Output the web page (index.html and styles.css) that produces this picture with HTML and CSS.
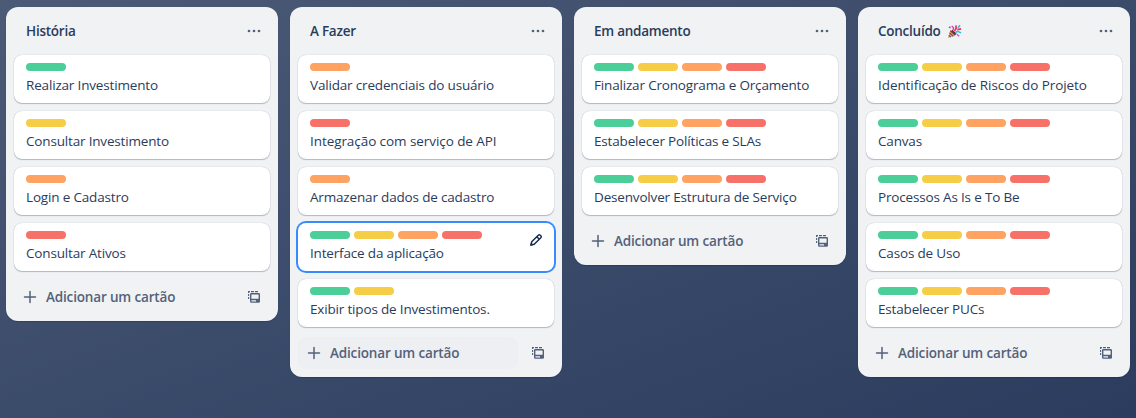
FILE: index.html
```
<!DOCTYPE html>
<html lang="pt-BR">
<head>
<meta charset="utf-8">
<title>Quadro</title>
<link rel="stylesheet" href="styles.css">
</head>
<body>
<svg class="sprite" aria-hidden="true">
  <symbol id="more" viewBox="0 0 16 16"><g fill="currentColor"><circle cx="3" cy="8" r="1.35"/><circle cx="8" cy="8" r="1.35"/><circle cx="13" cy="8" r="1.35"/></g></symbol>
  <symbol id="plus" viewBox="0 0 16 16"><path d="M8 2.5v11M2.5 8h11" fill="none" stroke="currentColor" stroke-width="1.5" stroke-linecap="round"/></symbol>
  <symbol id="template" viewBox="0 0 16 16"><path d="M2.6 2v2M2.6 5v2M2.6 8v2M2 2.6h2M5 2.6h3M9 2.6h3" fill="none" stroke="currentColor" stroke-width="1.1"/><path fill="currentColor" fill-rule="evenodd" d="M5.3 4h7.4A1.3 1.3 0 0 1 14 5.3v7.2a1.3 1.3 0 0 1-1.3 1.3H5.3A1.3 1.3 0 0 1 4 12.5V5.3A1.3 1.3 0 0 1 5.3 4zM5.4 5.4v4.4h7.2V5.4zM5.4 11.2v1.2H10v-1.2z"/></symbol>
  <symbol id="pencil" viewBox="0 0 16 16"><path d="M3 13l.7-3.2 6.6-6.6c.6-.6 1.3-.6 1.9 0l.6.6c.6.6.6 1.3 0 1.9l-6.6 6.6zM8.8 4.7l2.5 2.5" fill="none" stroke="currentColor" stroke-width="1.5" stroke-linejoin="round"/><path d="M2.2 13.8l.8-3.2L5.4 13z" fill="currentColor"/></symbol>
  <symbol id="party" viewBox="0 0 16 16"><path d="M1 15L3.5 6.5 9.5 12z" fill="#e0a53a"/><path d="M2.7 9.5l4 3.7M1.9 12l2 2M3.6 7.2l5 4.6" stroke="#62439a" stroke-width="1.1"/><path d="M5 7l4.5 4" stroke="#6a3030" stroke-width="2"/><path d="M5 2l2 2-.5 2.5M2 3.2l2 .8" fill="none" stroke="#d83bd0" stroke-width="1.5"/><path d="M8 7.5l1.8-3L9.5 1.5M11 6l4-.8" fill="none" stroke="#f0305c" stroke-width="1.8"/><path d="M9 9l2.5-1.2L15 9.5M11.5 4L14 1.5" fill="none" stroke="#2bbde6" stroke-width="1.7"/><path d="M10.5 11l2.5 2" stroke="#d84bc0" stroke-width="1.4"/></symbol>
</svg>
<main class="board">
  <section class="list">
    <header class="list-header"><h2>História</h2><svg class="icon"><use href="#more"/></svg></header>
    <div class="cards">
      <article class="card"><div class="labels"><i class="green"></i></div><p>Realizar Investimento</p></article>
      <article class="card"><div class="labels"><i class="yellow"></i></div><p>Consultar Investimento</p></article>
      <article class="card"><div class="labels"><i class="orange"></i></div><p>Login e Cadastro</p></article>
      <article class="card"><div class="labels"><i class="red"></i></div><p>Consultar Ativos</p></article>
    </div>
    <footer class="list-footer"><div class="add"><svg class="icon"><use href="#plus"/></svg><span>Adicionar um cartão</span></div><svg class="icon"><use href="#template"/></svg></footer>
  </section>
  <section class="list">
    <header class="list-header"><h2>A Fazer</h2><svg class="icon"><use href="#more"/></svg></header>
    <div class="cards">
      <article class="card"><div class="labels"><i class="orange"></i></div><p>Validar credenciais do usuário</p></article>
      <article class="card"><div class="labels"><i class="red"></i></div><p class="natural">Integração com serviço de API</p></article>
      <article class="card"><div class="labels"><i class="orange"></i></div><p>Armazenar dados de cadastro</p></article>
      <article class="card selected"><div class="labels"><i class="green"></i><i class="yellow"></i><i class="orange"></i><i class="red"></i></div><p>Interface da aplicação</p><svg class="icon edit"><use href="#pencil"/></svg></article>
      <article class="card"><div class="labels"><i class="green"></i><i class="yellow"></i></div><p>Exibir tipos de Investimentos.</p></article>
    </div>
    <footer class="list-footer"><div class="add hovered"><svg class="icon"><use href="#plus"/></svg><span>Adicionar um cartão</span></div><svg class="icon"><use href="#template"/></svg></footer>
  </section>
  <section class="list">
    <header class="list-header"><h2>Em andamento</h2><svg class="icon"><use href="#more"/></svg></header>
    <div class="cards">
      <article class="card"><div class="labels"><i class="green"></i><i class="yellow"></i><i class="orange"></i><i class="red"></i></div><p>Finalizar Cronograma e Orçamento</p></article>
      <article class="card"><div class="labels"><i class="green"></i><i class="yellow"></i><i class="orange"></i><i class="red"></i></div><p>Estabelecer Políticas e SLAs</p></article>
      <article class="card"><div class="labels"><i class="green"></i><i class="yellow"></i><i class="orange"></i><i class="red"></i></div><p>Desenvolver Estrutura de Serviço</p></article>
    </div>
    <footer class="list-footer"><div class="add"><svg class="icon"><use href="#plus"/></svg><span>Adicionar um cartão</span></div><svg class="icon"><use href="#template"/></svg></footer>
  </section>
  <section class="list">
    <header class="list-header"><h2>Concluído <svg class="emoji"><use href="#party"/></svg></h2><svg class="icon"><use href="#more"/></svg></header>
    <div class="cards">
      <article class="card"><div class="labels"><i class="green"></i><i class="yellow"></i><i class="orange"></i><i class="red"></i></div><p class="natural">Identificação de Riscos do Projeto</p></article>
      <article class="card"><div class="labels"><i class="green"></i><i class="yellow"></i><i class="orange"></i><i class="red"></i></div><p>Canvas</p></article>
      <article class="card"><div class="labels"><i class="green"></i><i class="yellow"></i><i class="orange"></i><i class="red"></i></div><p>Processos As Is e To Be</p></article>
      <article class="card"><div class="labels"><i class="green"></i><i class="yellow"></i><i class="orange"></i><i class="red"></i></div><p>Casos de Uso</p></article>
      <article class="card"><div class="labels"><i class="green"></i><i class="yellow"></i><i class="orange"></i><i class="red"></i></div><p>Estabelecer PUCs</p></article>
    </div>
    <footer class="list-footer"><div class="add"><svg class="icon"><use href="#plus"/></svg><span>Adicionar um cartão</span></div><svg class="icon"><use href="#template"/></svg></footer>
  </section>
</main>
</body>
</html>
```
FILE: styles.css
```
* { box-sizing: border-box; }
body {
  margin: 0;
  font: 400 14px/20px "Open Sans", "Noto Sans", sans-serif;
  color: #172b4d;
}
.sprite { display: none; }
.board {
  display: flex;
  align-items: flex-start;
  gap: 12px;
  height: 418px;
  padding: 7px 6px;
  overflow: hidden;
  background: linear-gradient(160deg, #4b5a76 0%, #2b3c5e 100%);
}
.list {
  flex: 0 0 272px;
  padding: 0 8px 8px;
  border-radius: 12px;
  background: #f1f2f4;
  box-shadow: 0 1px 1px #091e4240;
}
.list-header {
  display: flex;
  align-items: center;
  justify-content: space-between;
  height: 48px;
  padding: 0 8px 0 12px;
}
h2 {
  display: flex;
  align-items: center;
  gap: 6px;
  margin: 0;
  color: #2a3c5c;
  font-size: 13.5px;
  line-height: 20px;
  font-weight: 600;
  letter-spacing: -0.25px;
}
.icon { flex: none; width: 16px; height: 16px; color: #53627b; }
.emoji { width: 15px; height: 15px; }
.cards { display: flex; flex-direction: column; gap: 8px; }
.card {
  position: relative;
  height: 48px;
  padding: 8px 12px 4px;
  border-radius: 8px;
  background: #fff;
  box-shadow: 0 1px 1px #091e4240, 0 0 1px #091e424f;
}
.card.selected { box-shadow: 0 0 0 2px #388bff; }
.labels { display: flex; gap: 4px; height: 8px; }
.labels i { width: 40px; height: 8px; border-radius: 4px; }
.green { background: #4bce97; }
.yellow { background: #f5cd47; }
.orange { background: #fea362; }
.red { background: #f87168; }
p {
  margin: 4px 0 0;
  color: #2a3c5c;
  font-size: 13.5px;
  line-height: 20px;
  letter-spacing: -0.17px;
  white-space: nowrap;
}
.natural { letter-spacing: -0.07px; }
.edit { position: absolute; top: 9px; right: 10px; color: #172b4d; }
.list-footer {
  display: flex;
  align-items: center;
  justify-content: space-between;
  margin-top: 10px;
  padding-right: 8px;
}
.add {
  display: flex;
  align-items: center;
  gap: 8px;
  width: 220px;
  height: 32px;
  padding: 0 8px;
  border-radius: 8px;
  color: #53627b;
  font-size: 13.5px;
  font-weight: 600;
  letter-spacing: -0.16px;
}
.add.hovered { background: #eeeff2; }
```
